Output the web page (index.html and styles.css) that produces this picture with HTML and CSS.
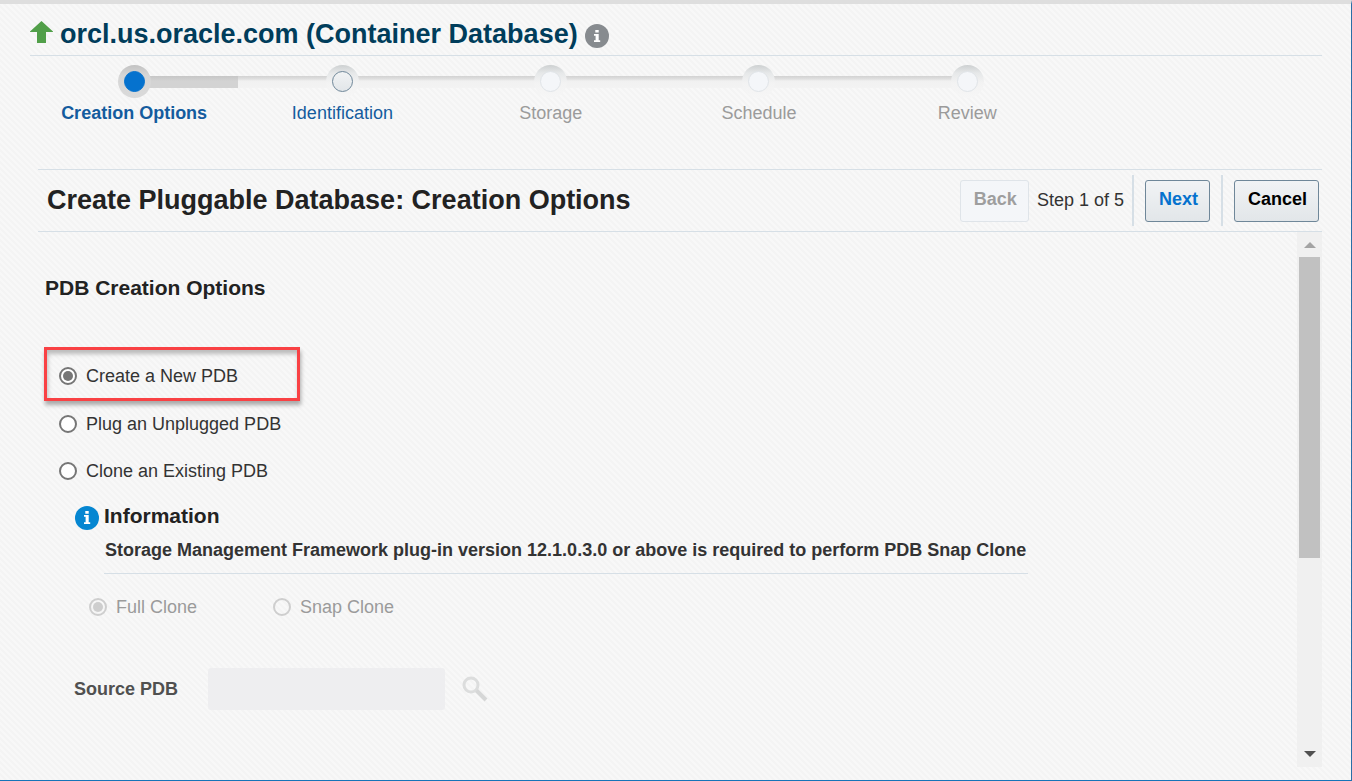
FILE: index.html
```html
<!DOCTYPE html>
<html lang="en">
<head>
<meta charset="utf-8">
<title>Create Pluggable Database: Creation Options</title>
<link rel="stylesheet" href="styles.css">
</head>
<body>
<div class="page">
  <header class="target">
    <svg class="up-icon" width="23" height="22" viewBox="0 0 23 22" aria-hidden="true"><path d="M11.500 0L23 10.500V11H16V22H7V11H0V10.500Z" fill="#519f49"/></svg>
    <h1 class="target-name">orcl.us.oracle.com (Container Database)</h1>
    <svg class="info-icon" width="24" height="24" viewBox="0 0 24 24" aria-hidden="true"><circle cx="12" cy="12" r="12" fill="#878b8f"/><path d="M10.300 6h3.400v2.600h-3.400zM9 10h4.700v6.200h1.500v1.800H9v-1.800h1.600v-4.400H9z" fill="#fff"/></svg>
  </header>

  <nav class="train" aria-label="Steps">
    <ol class="stops">
      <li class="stop current"><span class="rail"><span class="ring"><span class="dot"></span></span></span><a class="stop-name" href="#options" aria-current="step">Creation Options</a></li>
      <li class="stop next"><span class="rail"><span class="ring"><span class="dot"></span></span></span><a class="stop-name" href="#identification">Identification</a></li>
      <li class="stop"><span class="rail"><span class="ring"><span class="dot"></span></span></span><span class="stop-name">Storage</span></li>
      <li class="stop"><span class="rail"><span class="ring"><span class="dot"></span></span></span><span class="stop-name">Schedule</span></li>
      <li class="stop"><span class="rail"><span class="ring"><span class="dot"></span></span></span><span class="stop-name">Review</span></li>
    </ol>
  </nav>

  <main class="wizard">
    <div class="title-bar">
      <h2 class="title">Create Pluggable Database: Creation Options</h2>
      <div class="actions">
        <button class="btn" type="button" disabled>Back</button>
        <span class="step-count">Step 1 of 5</span>
        <span class="divider"></span>
        <button class="btn primary" type="button">Next</button>
        <span class="divider"></span>
        <button class="btn" type="button">Cancel</button>
      </div>
    </div>

    <div class="body">
      <form class="options" id="options">
        <h3 class="section-title">PDB Creation Options</h3>
        <div class="choices">
          <div class="highlight"><label class="choice"><input type="radio" name="source" checked>Create a New PDB</label></div>
          <label class="choice"><input type="radio" name="source">Plug an Unplugged PDB</label>
          <label class="choice"><input type="radio" name="source">Clone an Existing PDB</label>
        </div>
        <div class="notice">
          <svg class="notice-icon" width="24" height="24" viewBox="0 0 24 24" aria-hidden="true"><circle cx="12" cy="12" r="12" fill="#0586d1"/><path d="M10.300 5h3.400v2.800h-3.400zM9 9h4.700v7.200h1.500v1.800H9v-1.800h1.600v-5.400H9z" fill="#fff"/></svg>
          <div class="notice-text">
            <h4 class="notice-title">Information</h4>
            <p class="notice-message">Storage Management Framework plug-in version 12.1.0.3.0 or above is required to perform PDB Snap Clone</p>
          </div>
        </div>
        <div class="clone-types">
          <label class="choice"><input type="radio" name="clone" checked disabled>Full Clone</label>
          <label class="choice"><input type="radio" name="clone" disabled>Snap Clone</label>
        </div>
        <div class="field">
          <label class="field-label" for="source-pdb">Source PDB</label>
          <input class="field-input" id="source-pdb" type="text" disabled>
          <button class="search" type="button" aria-label="Search" disabled>
            <svg width="26" height="26" viewBox="0 0 26 26" aria-hidden="true"><circle cx="9" cy="9" r="7" fill="none" stroke="#dcdddd" stroke-width="3"/><path d="M14.500 14.500L24 24" stroke="#d6d7d7" stroke-width="4"/></svg>
          </button>
        </div>
      </form>
      <div class="scrollbar" aria-hidden="true">
        <span class="arrow up"></span>
        <span class="track"><span class="thumb"></span></span>
        <span class="arrow down"></span>
      </div>
    </div>
  </main>
</div>
</body>
</html>
```
FILE: styles.css
```css
* { box-sizing: border-box; }

body {
  margin: 0;
  font-family: "Liberation Sans", Arial, sans-serif;
  font-size: 18px;
  line-height: 24px;
  color: #333;
}

h1, h2, h3, h4, p, ol { margin: 0; padding: 0; }

.page {
  display: flex;
  flex-direction: column;
  min-height: 100vh;
  padding: 12px 29px 13px 30px;
  border-top: 4px solid #dedede;
  border-right: 1px solid #2a6ea6;
  border-bottom: 1px solid #1674b8;
  background: linear-gradient(45deg, #f8f8f8 25%, #f4f4f4 25% 50%, #f8f8f8 50% 75%, #f4f4f4 75%) 0 0 / 6px 6px;
}

.target {
  display: flex;
  align-items: center;
  gap: 7px;
  height: 40px;
  border-bottom: 1px solid #d6dfe6;
}

.up-icon { margin-bottom: 7px; }

.target-name { padding-bottom: 4px; font-size: 27px; line-height: 36px; color: #003d5b; }

.train { padding-top: 9px; }

.stops {
  display: grid;
  grid-template-columns: repeat(5, 1fr);
  width: 80.6%;
  list-style: none;
}

.stop { text-align: center; color: #9b9b9b; }

.rail {
  display: flex;
  align-items: center;
  justify-content: center;
  height: 33px;
  background: linear-gradient(#d2d2d2, #e0e0e0 3px, #f1f1f1 5px, #f3f3f3) 0 11px / 100% 12px no-repeat;
}

.stop:first-child .rail { background: linear-gradient(#c6c6c6, #d3d3d3 5px) 100% 11px / 50% 12px no-repeat; }
.stop:last-child .rail { background-size: 50% 12px; }

.ring {
  display: flex;
  align-items: center;
  justify-content: center;
  width: 33px;
  height: 33px;
  border-radius: 50%;
  background: linear-gradient(#cdd0d1, #e6e8e9 8px, #f3f3f3 18px, #f6f6f6);
}

.current .ring { background: linear-gradient(#c2c2c2, #d6d6d6 10px, #dadada); }

.dot {
  width: 21px;
  height: 21px;
  border: 1px solid #e0e4e8;
  border-radius: 50%;
  background: #f4f6f9;
}

.current .dot { border-color: #0572ce; background: #0572ce; }
.next .dot { border-color: #6f8799; background: linear-gradient(#f1f3f4, #e2e6e9); }

.stop-name { display: block; padding-top: 3px; text-decoration: none; color: inherit; }
.current .stop-name { font-weight: bold; color: #145c9e; }
.next .stop-name { color: #145c9e; }

.wizard {
  display: flex;
  flex: 1;
  flex-direction: column;
  margin: 44px 0 0 8px;
}

.title-bar {
  display: flex;
  align-items: center;
  justify-content: space-between;
  padding: 5px 3px 5px 9px;
  border-top: 1px solid #d6dfe6;
  border-bottom: 1px solid #d6dfe6;
}

.title { padding-bottom: 2px; font-size: 27px; line-height: 36px; color: #222; }

.actions { display: flex; align-items: center; }

.btn {
  height: 42px;
  padding: 0 11px 4px 13px;
  border: 1px solid #6f8799;
  border-radius: 3px;
  background: linear-gradient(#f1f3f5, #e2e6e9);
  font: bold 18px/24px "Liberation Sans", Arial, sans-serif;
  color: #000;
}

.btn.primary { color: #0572ce; }
.btn:disabled { border-color: #dfe4e9; background: #f4f6f9; color: #9e9e9e; }

.step-count { padding: 0 8px 2px; }

.divider { width: 2px; height: 51px; margin-right: 11px; background: #d6dfe6; }
.btn + .divider { margin-left: 11px; }

.body { display: flex; flex: 1; }

.options { flex: 1; padding: 44px 0 0 7px; }

.section-title { font-size: 21px; line-height: 24px; color: #222; }

.choices {
  display: flex;
  flex-direction: column;
  align-items: flex-start;
  padding-top: 47px;
}

.choice { display: flex; align-items: center; gap: 9px; height: 47px; padding-left: 14px; }

.choice input {
  display: grid;
  place-content: center;
  width: 18px;
  height: 18px;
  margin: 0;
  border: 2px solid #767676;
  border-radius: 50%;
  background: #fff;
  appearance: none;
}

.choice input:checked::before {
  width: 10px;
  height: 10px;
  border-radius: 50%;
  background: #767676;
  content: "";
}

.choice:has(input:disabled) { color: #9b9b9b; }
.choice input:disabled { border-color: #cecece; background: none; }
.choice input:disabled::before { background: #cecece; }

.highlight {
  width: 256px;
  margin: 0 0 -1px -1px;
  border: 3px solid #f94144;
  box-shadow: 1px 4px 4px #aaa, inset 1px 4px 4px #bbb;
}

.highlight .choice { height: 48px; padding: 4px 0 0 12px; }

.notice { display: flex; gap: 5px; padding: 10px 0 0 30px; }
.notice-icon { margin-top: 2px; }
.notice-title { font-size: 21px; line-height: 24px; color: #222; }
.notice-message { padding: 10px 2px 11px 1px; border-bottom: 1px solid #d6dfe6; font-weight: bold; }

.clone-types { display: flex; gap: 76px; padding: 9px 0 0 44px; }
.clone-types .choice { padding-left: 0; }

.field { display: flex; align-items: center; padding: 38px 0 0 29px; }
.field-label { width: 134px; font-weight: bold; color: #505050; }

.field-input {
  width: 237px;
  height: 42px;
  border: 0;
  border-radius: 3px;
  background: #eeeef0;
}

.search { display: flex; margin-left: 17px; padding: 0; border: 0; background: none; }

.scrollbar {
  display: flex;
  flex-direction: column;
  align-items: center;
  justify-content: space-between;
  width: 25px;
  padding: 10px 0;
  background: #f0f0f0;
}

.arrow { border: 6px solid transparent; }
.arrow.up { border-top: 0; border-bottom-color: #a3a3a3; }
.arrow.down { border-bottom: 0; border-top-color: #505050; }

.track { flex: 1; width: 21px; margin: 9px 0; }
.thumb { display: block; height: 62%; background: #c1c1c1; }
```
